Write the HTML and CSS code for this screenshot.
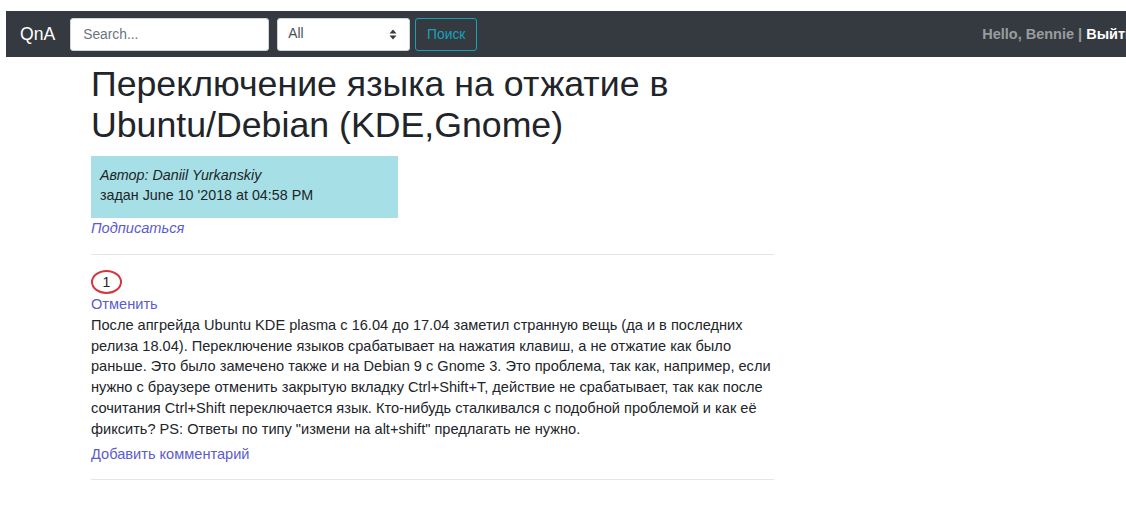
FILE: index.html
```html
<!DOCTYPE html>
<html lang="ru">
<head>
<meta charset="utf-8">
<title>Переключение языка на отжатие в Ubuntu/Debian (KDE,Gnome) — QnA</title>
<link rel="stylesheet" href="styles.css">
</head>
<body>
<div class="page">
  <nav class="navbar">
    <a class="brand" href="#">QnA</a>
    <form class="search">
      <input class="field search-input" type="text" placeholder="Search...">
      <div class="field select">
        <span>All</span>
        <svg class="caret" width="8" height="11" viewBox="0 0 8 11"><path d="M4 0.5 L7.5 4.5 H0.5 Z M4 10.5 L0.5 6.5 H7.5 Z" fill="#343a40"/></svg>
      </div>
      <button class="btn-search" type="button">Поиск</button>
    </form>
    <div class="user">
      <span class="hello">Hello, Bennie</span>
      <span class="sep">|</span>
      <a class="logout" href="#">Выйти</a>
    </div>
  </nav>

  <main class="content">
    <h1 class="title">Переключение языка на отжатие в Ubuntu/Debian (KDE,Gnome)</h1>
    <div class="meta">
      <div class="author">Автор: Daniil Yurkanskiy</div>
      <div class="date">задан June 10 '2018 at 04:58 PM</div>
    </div>
    <a class="subscribe" href="#">Подписаться</a>
    <hr class="rule">
    <div class="votes">1</div>
    <a class="link" href="#">Отменить</a>
    <p class="body">После апгрейда Ubuntu KDE plasma с 16.04 до 17.04 заметил странную вещь (да и в последних релиза 18.04). Переключение языков срабатывает на нажатия клавиш, а не отжатие как было раньше. Это было замечено также и на Debian 9 с Gnome 3. Это проблема, так как, например, если нужно с браузере отменить закрытую вкладку Ctrl+Shift+T, действие не срабатывает, так как после сочитания Ctrl+Shift переключается язык. Кто-нибудь сталкивался с подобной проблемой и как её фиксить? PS: Ответы по типу "измени на alt+shift" предлагать не нужно.</p>
    <a class="link" href="#">Добавить комментарий</a>
    <hr class="rule">
  </main>
</div>
</body>
</html>
```

FILE: styles.css
```css
html, body {
  overflow: hidden;
}

body {
  margin: 0;
  background: #fff;
  font-family: "Liberation Sans", Arial, sans-serif;
  font-size: 14.6px;
  line-height: 20.8px;
  color: #212529;
}

.page {
  margin: 11px 0 0 6px;
  width: 1142px;
}

/* top navigation bar */
.navbar {
  display: flex;
  align-items: center;
  height: 46px;
  padding: 0 14px;
  background: #343a40;
}

.brand {
  color: #fff;
  text-decoration: none;
  font-size: 17.6px;
  margin-right: 15px;
}

.search {
  display: flex;
  align-items: center;
  margin: 0;
}

.field {
  box-sizing: border-box;
  height: 33px;
  border: 1px solid #ced4da;
  border-radius: 3px;
  background: #fff;
  font-family: inherit;
  font-size: 13.8px;
  color: #495057;
}

.search-input {
  width: 199px;
  padding: 0 12px;
  margin-right: 8px;
}

.search-input::placeholder {
  color: #6c757d;
}

.select {
  display: flex;
  align-items: center;
  justify-content: space-between;
  width: 133px;
  padding: 0 12px 0 10px;
  margin-right: 5px;
}

.caret {
  display: block;
}

.btn-search {
  box-sizing: border-box;
  height: 33px;
  width: 62px;
  padding: 0;
  border: 1px solid #17a2b8;
  border-radius: 3px;
  background: transparent;
  color: #17a2b8;
  font-family: inherit;
  font-size: 13.8px;
}

.user {
  margin-left: auto;
  font-size: 14.5px;
  font-weight: bold;
  white-space: nowrap;
}

.hello, .sep {
  color: rgba(255, 255, 255, 0.5);
}

.logout {
  color: #fff;
  text-decoration: none;
}

/* question body */
.content {
  width: 683px;
  margin-left: 85px;
}

.title {
  margin: 7px 0 9px;
  font-size: 35.7px;
  line-height: 41.3px;
  font-weight: 500;
  color: #212529;
}

.meta {
  width: 307px;
  box-sizing: border-box;
  padding: 9px 9px 12px;
  background: #a6dfe5;
  font-size: 14.3px;
}

.author {
  font-style: italic;
}

.subscribe {
  display: block;
  font-style: italic;
  color: #5b5bd0;
  text-decoration: none;
}

.rule {
  margin: 15px 0;
  border: 0;
  border-top: 1px solid rgba(0, 0, 0, 0.1);
}

.votes {
  box-sizing: border-box;
  width: 31px;
  height: 24px;
  border: 2px solid #d0373f;
  border-radius: 50%;
  text-align: center;
  line-height: 20px;
  font-size: 14px;
}

.link {
  display: block;
  color: #5b5bd0;
  text-decoration: none;
}

.body {
  margin: 0 0 4px;
}
```
